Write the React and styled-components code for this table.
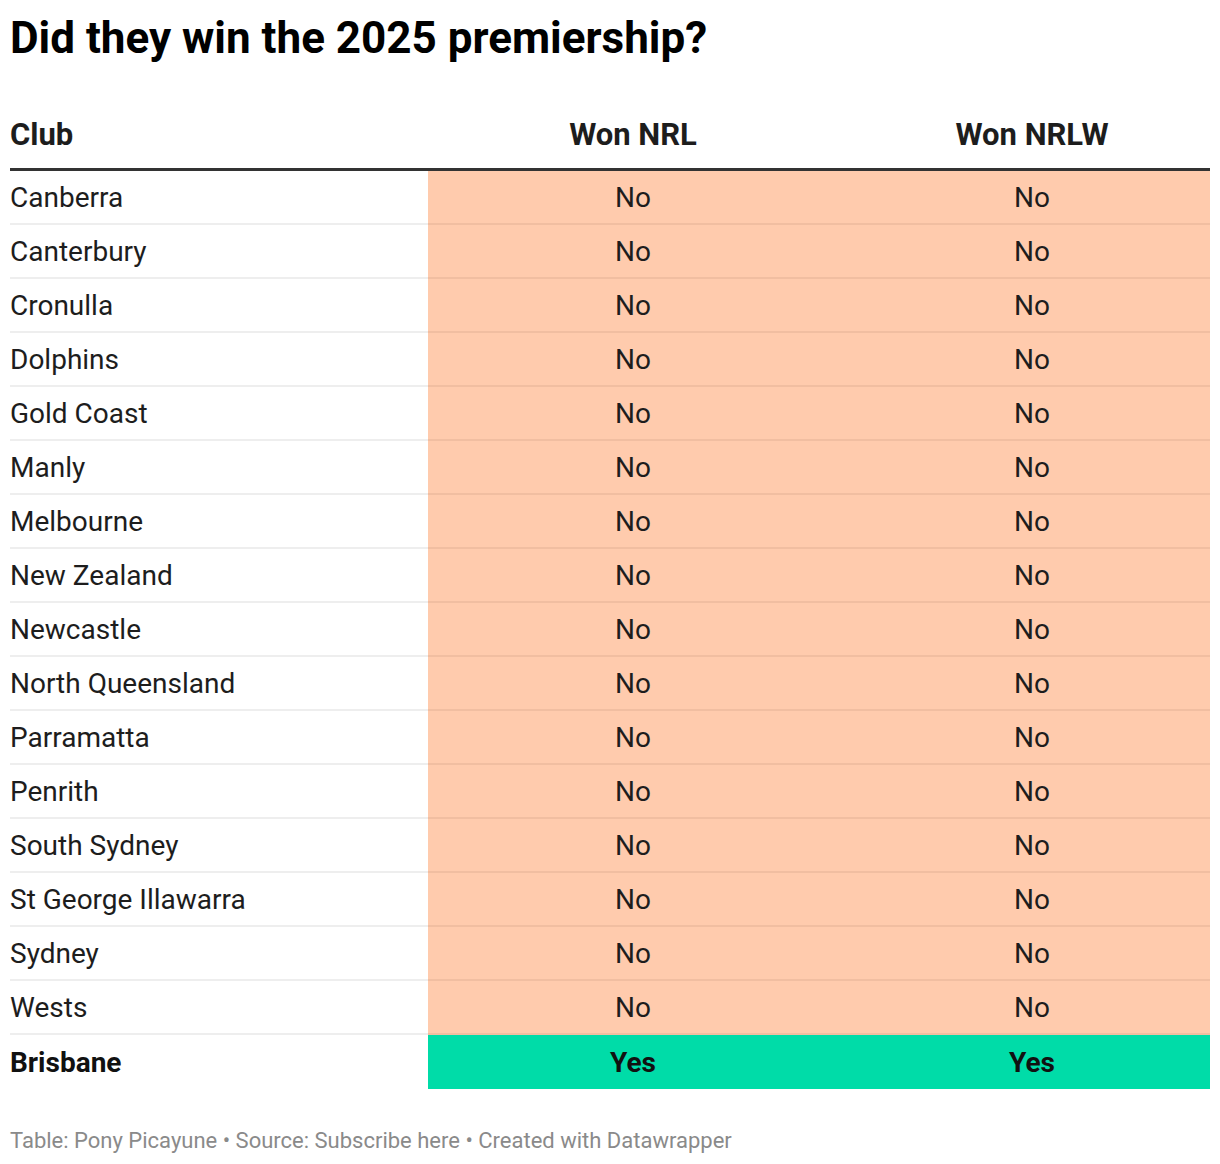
import React from 'react';
import styled, { createGlobalStyle } from 'styled-components';

const GlobalStyle = createGlobalStyle`
  *, *::before, *::after { box-sizing: border-box; }
  body {
    margin: 0;
    background: #fff;
    font-family: Roboto, "Liberation Sans", sans-serif;
    color: #1d1d1d;
  }
`;

const Page = styled.div`
  padding: 12px 10px 0 10px;
  width: 1220px;
`;

const Title = styled.h1`
  margin: 0;
  font-size: 44px;
  font-weight: 700;
  line-height: 52px;
  color: #000;
`;

const Table = styled.div`
  display: grid;
  grid-template-columns: 418px 410px 372px;
`;

const HeadCell = styled.div`
  font-size: 31px;
  font-weight: 700;
  height: 107px;
  display: flex;
  align-items: flex-end;
  justify-content: ${p => (p.$center ? 'center' : 'flex-start')};
  padding-left: ${p => (p.$pad ? '16px' : '0')};
  padding-bottom: 15px;
  border-bottom: 3px solid #333;
`;

const Cell = styled.div`
  height: 54px;
  font-size: 28px;
  font-weight: ${p => (p.$bold ? 700 : 400)};
  display: flex;
  align-items: center;
  justify-content: ${p => (p.$center ? 'center' : 'flex-start')};
  padding-left: ${p => (p.$pad ? '16px' : '0')};
  background: ${p => p.$bg || 'transparent'};
  border-bottom: ${p => (p.$last ? '0' : p.$bg ? '2px solid #f1bea1' : '2px solid #eeeeee')};
  color: ${p => (p.$bold ? '#111' : '#1d1d1d')};
`;

const Footer = styled.div`
  margin-top: 39px;
  font-size: 22px;
  color: #8a8a8a;
`;

const clubs = [
  'Canberra', 'Canterbury', 'Cronulla', 'Dolphins', 'Gold Coast', 'Manly',
  'Melbourne', 'New Zealand', 'Newcastle', 'North Queensland', 'Parramatta',
  'Penrith', 'South Sydney', 'St George Illawarra', 'Sydney', 'Wests',
];

const PEACH = '#ffcbad';
const GREEN = '#00dca8';

export default function App() {
  return (
    <Page>
      <GlobalStyle />
      <Title>Did they win the 2025 premiership?</Title>
      <Table>
        <HeadCell>Club</HeadCell>
        <HeadCell $center>Won NRL</HeadCell>
        <HeadCell $center $pad>Won NRLW</HeadCell>
        {clubs.map(c => (
          <React.Fragment key={c}>
            <Cell>{c}</Cell>
            <Cell $center $bg={PEACH}>No</Cell>
            <Cell $center $pad $bg={PEACH}>No</Cell>
          </React.Fragment>
        ))}
        <Cell $bold $last>Brisbane</Cell>
        <Cell $bold $center $last $bg={GREEN}>Yes</Cell>
        <Cell $bold $center $pad $last $bg={GREEN}>Yes</Cell>
      </Table>
      <Footer>Table: Pony Picayune • Source: Subscribe here • Created with Datawrapper</Footer>
    </Page>
  );
}
